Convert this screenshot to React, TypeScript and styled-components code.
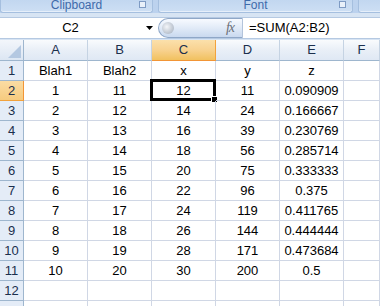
import React from "react";
import styled, { createGlobalStyle } from "styled-components";

const GlobalStyle = createGlobalStyle`
  html, body { margin: 0; padding: 0; background: #ffffff; overflow: hidden; }
  body { font-family: "Liberation Sans", Arial, sans-serif; }
`;

const Frame = styled.div`
  width: 380px;
  height: 306px;
  overflow: hidden;
  display: flex;
  flex-direction: column;
  background: #d6e3f3;
`;

const Ribbon = styled.div`
  height: 13px;
  display: flex;
  gap: 5px;
  background: #bcd2ee;
  flex: none;
`;

const Group = styled.div<{ $w: number }>`
  width: ${(p) => p.$w}px;
  flex: none;
  position: relative;
  box-sizing: border-box;
  height: 13px;
  background: linear-gradient(#c2d7f0, #cddff4);
  border: 1px solid #a5bfdf;
  border-top: none;
  border-radius: 0 0 3px 3px;
  box-shadow: inset 0 -1px 0 #e6effa;
  color: #3e6aaa;
  font-size: 12px;
  line-height: 10px;
  text-align: center;
  overflow: hidden;
`;

const Launcher = styled.span`
  position: absolute;
  right: 6px;
  top: 1px;
  width: 7px;
  height: 7px;
  border: 1px solid #7e9bc4;
  background: #e8f0fa;
  box-sizing: border-box;
`;

const Band = styled.div<{ $h: number }>`
  height: ${(p) => p.$h}px;
  flex: none;
  background: #d7e4f3;
`;

const FormulaBar = styled.div`
  height: 21px;
  flex: none;
  display: flex;
  background: #ffffff;
  border-top: 1px solid #b5c9e2;
  border-bottom: 1px solid #b5c9e2;
  box-sizing: border-box;
  height: 22px;
`;

const NameBox = styled.div`
  width: 141px;
  flex: none;
  font-size: 13px;
  line-height: 20px;
  text-align: center;
  color: #000;
`;

const Drop = styled.div`
  width: 16px;
  flex: none;
  display: flex;
  align-items: center;
  justify-content: center;
`;

const Pill = styled.div`
  width: 85px;
  flex: none;
  margin-left: 1px;
  box-sizing: border-box;
  border: 1px solid #8fa7c7;
  border-right: 1px solid #b3c4db;
  border-radius: 10px 0 0 10px;
  background: linear-gradient(#f7faff 0%, #e3ecf8 45%, #c9d9ef 100%);
  display: flex;
  align-items: center;
  padding-left: 3px;
  gap: 0;
`;

const Knob = styled.span`
  width: 12px;
  height: 12px;
  border-radius: 50%;
  background: radial-gradient(circle at 40% 40%, #f4f6f9 0%, #c5ccd6 55%, #a1acbb 100%);
  flex: none;
`;

const Fx = styled.span`
  margin-left: auto;
  margin-right: 8px;
  font-family: "Liberation Serif", "Times New Roman", serif;
  font-style: italic;
  font-size: 14px;
  color: #6b6f78;
  letter-spacing: -1px;
`;

const FormulaInput = styled.div`
  flex: 1;
  padding-left: 6px;
  font-size: 13px;
  line-height: 20px;
  color: #000;
  white-space: nowrap;
`;

const Sheet = styled.div`
  display: grid;
  grid-template-columns: 24px repeat(5, 64px) 36px;
  grid-auto-rows: 20px;
  grid-template-rows: 21px;
  background: #ffffff;
  flex: none;
`;

const Corner = styled.div`
  position: relative;
  box-sizing: border-box;
  background: linear-gradient(#f3f6fb, #dce6f3);
  border-right: 1px solid #9eb6ce;
  border-bottom: 1px solid #9eb6ce;
`;

const CornerTri = styled.span`
  position: absolute;
  right: 2px;
  bottom: 2px;
  width: 0;
  height: 0;
  border-left: 13px solid transparent;
  border-bottom: 13px solid #b4c8e1;
`;

const ColHead = styled.div<{ $sel?: boolean }>`
  box-sizing: border-box;
  border-right: 1px solid ${(p) => (p.$sel ? "#f2a23c" : "#c5d3e3")};
  border-bottom: 1px solid ${(p) => (p.$sel ? "#f29536" : "#9eb6ce")};
  background: ${(p) =>
    p.$sel
      ? "linear-gradient(#fbe0ab, #f8d290 50%, #f1c15f)"
      : "linear-gradient(#f9fbfd, #e9eff7 50%, #dfe8f4)"};
  color: #1b2f4d;
  font-size: 13px;
  line-height: 20px;
  text-align: center;
`;

const RowHead = styled.div<{ $sel?: boolean }>`
  box-sizing: border-box;
  border-right: 1px solid ${(p) => (p.$sel ? "#f29536" : "#9eb6ce")};
  border-bottom: 1px solid ${(p) => (p.$sel ? "#f2a23c" : "#9eb6ce")};
  background: ${(p) => (p.$sel ? "linear-gradient(#fbdca3, #f6cb7f)" : "#e4ecf7")};
  color: #1b2f4d;
  font-size: 13px;
  line-height: 19px;
  text-align: center;
`;

const Cell = styled.div`
  position: relative;
  box-sizing: border-box;
  border-right: 1px solid #d0d7e5;
  border-bottom: 1px solid #d0d7e5;
  font-size: 13px;
  line-height: 19px;
  text-align: center;
  color: #000;
  white-space: nowrap;
`;

const Active = styled.span`
  position: absolute;
  left: -2px;
  top: -2px;
  right: -1px;
  bottom: -1px;
  border: 2px solid #000;
  box-shadow: inset 0 0 0 1px #000;
  pointer-events: none;
`;

const Handle = styled.span`
  position: absolute;
  right: -4px;
  bottom: -4px;
  width: 5px;
  height: 5px;
  background: #000;
  border: 1px solid #fff;
`;

const cols = ["A", "B", "C", "D", "E", "F"];
const rows: (string | number)[][] = [
  ["Blah1", "Blah2", "x", "y", "z"],
  [1, 11, 12, 11, "0.090909"],
  [2, 12, 14, 24, "0.166667"],
  [3, 13, 16, 39, "0.230769"],
  [4, 14, 18, 56, "0.285714"],
  [5, 15, 20, 75, "0.333333"],
  [6, 16, 22, 96, "0.375"],
  [7, 17, 24, 119, "0.411765"],
  [8, 18, 26, 144, "0.444444"],
  [9, 19, 28, 171, "0.473684"],
  [10, 20, 30, 200, "0.5"],
  ["", "", "", "", ""],
  ["", "", "", "", ""],
];

export default function App() {
  return (
    <>
      <GlobalStyle />
      <Frame>
        <Ribbon>
          <Group $w={153}>
            Clipboard
            <Launcher />
          </Group>
          <Group $w={195}>
            Font
            <Launcher />
          </Group>
          <Group $w={40} />
        </Ribbon>
        <Band $h={4} />
        <FormulaBar>
          <NameBox>C2</NameBox>
          <Drop>
            <svg width="7" height="4" viewBox="0 0 7 4">
              <path d="M0 0 H7 L3.5 4 Z" fill="#000" />
            </svg>
          </Drop>
          <Pill>
            <Knob />
            <Fx>fx</Fx>
          </Pill>
          <FormulaInput>=SUM(A2:B2)</FormulaInput>
        </FormulaBar>
        <Band $h={1} />
        <Sheet>
          <Corner>
            <CornerTri />
          </Corner>
          {cols.map((c) => (
            <ColHead key={c} $sel={c === "C"}>
              {c}
            </ColHead>
          ))}
          {rows.map((r, i) => (
            <React.Fragment key={i}>
              <RowHead $sel={i === 1}>{i + 1}</RowHead>
              {r.map((v, j) => (
                <Cell key={j}>
                  {v}
                  {i === 1 && j === 2 && (
                    <Active>
                      <Handle />
                    </Active>
                  )}
                </Cell>
              ))}
              <Cell />
            </React.Fragment>
          ))}
        </Sheet>
      </Frame>
    </>
  );
}
